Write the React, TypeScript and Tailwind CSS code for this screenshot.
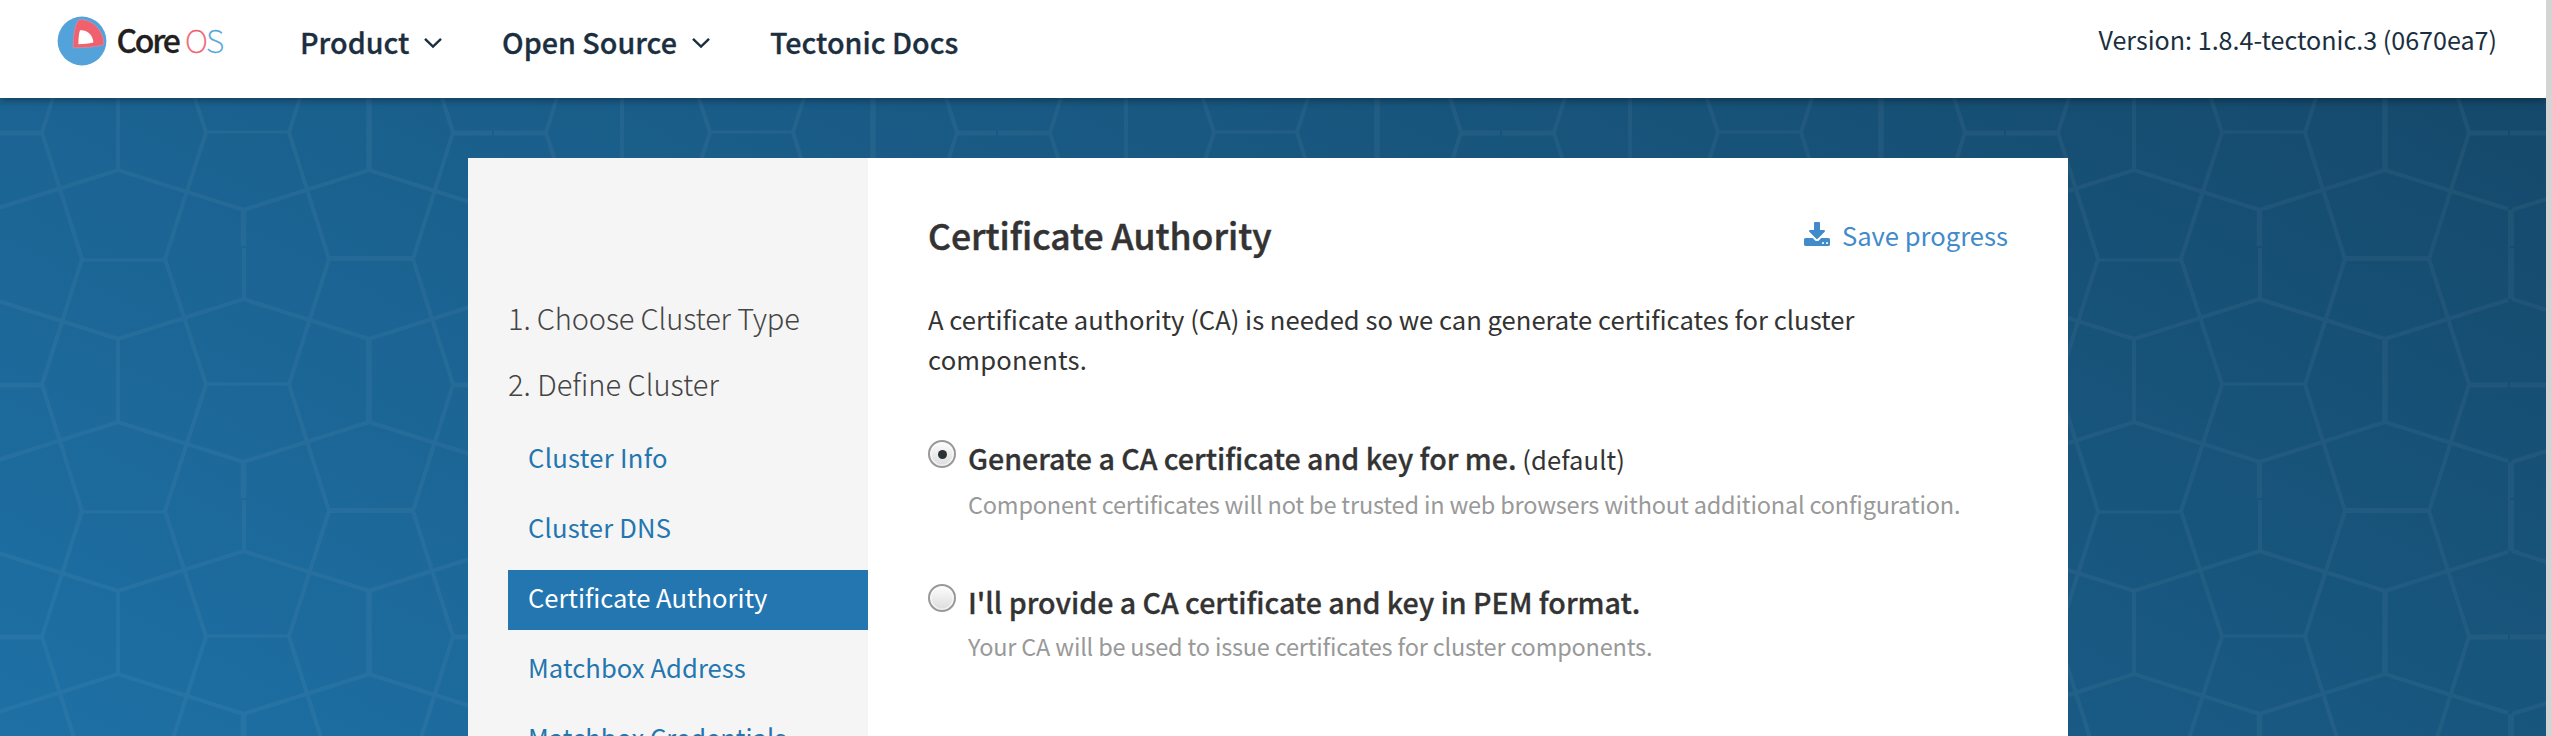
import React from "react";

const nav = [
  { label: "Product", itemClass: "w-[202px]", labelClass: "w-[124px]", menu: true },
  { label: "Open Source", itemClass: "w-[268px]", labelClass: "w-[190px]", menu: true },
  { label: "Tectonic Docs", itemClass: "w-[200px]", labelClass: "w-[200px]", menu: false },
];

const steps = [
  { label: "Cluster Info", tracking: "tracking-[0.3px]", active: false },
  { label: "Cluster DNS", tracking: "tracking-[0.2px]", active: false },
  { label: "Certificate Authority", tracking: "tracking-[-0.03px]", active: true },
  { label: "Matchbox Address", tracking: "tracking-[0.05px]", active: false },
  { label: "Matchbox Credentials", tracking: "tracking-normal", active: false },
];

function Logo() {
  return (
    <div className="flex items-center">
      <svg className="h-[50px] w-[50px]" viewBox="0 0 50 50">
        <circle cx="25" cy="25" r="24.4" fill="#53a3da" />
        <path d="M16.2 31.8C16.2 20 17.3 10 21.5 4C30 1.8 46.5 10 46.8 28.8C38 31.2 28 31.8 16.2 31.8Z" fill="#f1606d" stroke="#c98fae" strokeWidth="0.8" />
        <path d="M21.4 28.2C21.4 22.5 21.8 17.5 23 14.2C30.5 13.4 36.2 19.5 36.4 26.6C31.5 27.9 27 28.2 21.4 28.2Z" fill="#fff" />
      </svg>
      <div className="flex h-[50px] items-start pl-[9.5px] text-[32px] leading-[46px]">
        <span className="w-[68.5px] font-medium tracking-[-2.3px] text-[#231f20] [-webkit-text-stroke:0.3px]">Core</span>
        <span className="font-thin tracking-[-1.8px] text-[#f1606d] [-webkit-text-stroke:0.4px]">O</span>
        <span className="font-thin text-[#53a3da] [-webkit-text-stroke:0.4px]">S</span>
      </div>
    </div>
  );
}

function Chevron() {
  return (
    <svg className="mt-[1px] h-[12px] w-[18px]" viewBox="0 0 18 12" fill="none" stroke="#1b2f40" strokeWidth="2.4">
      <path d="M1 1.8L9 9.6L17 1.8" />
    </svg>
  );
}

function DownloadIcon() {
  return (
    <svg className="-mt-[2px] h-[24px] w-[26px]" viewBox="0 0 1664 1536" fill="currentColor">
      <path d="M1280 1344q0-26-19-45t-45-19-45 19-19 45 19 45 45 19 45-19 19-45zm256 0q0-26-19-45t-45-19-45 19-19 45 19 45 45 19 45-19 19-45zm128-224v320q0 40-28 68t-68 28h-1472q-40 0-68-28t-28-68v-320q0-40 28-68t68-28h465l135 136q58 56 136 56t136-56l136-136h464q40 0 68 28t28 68zm-325-569q17 41-14 70l-448 448q-18 19-45 19t-45-19l-448-448q-31-29-14-70 17-39 59-39h256v-448q0-26 19-45t45-19h256q26 0 45 19t19 45v448h256q42 0 59 39z" />
    </svg>
  );
}

function Mesh() {
  return (
    <svg className="absolute inset-0 h-full w-full" fill="none">
      <defs>
        <pattern id="mesh" x="-10" y="-102" width="504" height="252" patternUnits="userSpaceOnUse">
          <g stroke="#fff" strokeWidth="4">
            <path d="M52 -115.5L92 11L52 136.5L92 263M216 -115.5L175 11L216 136.5L175 263M299 -115.5L339 11L299 136.5L339 263M463 -115.5L423 11L463 136.5L423 263" />
            <path d="M2 214L128 174L253.5 214L379 174L502 213M2 51L128 91L253.5 51L379 91L502 52" />
            <path d="M128 91V174M254 0V51M504 214V252M504 0V51M2 214V250M2 0V51" />
            <path d="M92 12H175M216 136H299" strokeWidth="3" />
            <path d="M339 10.5H423M463 137H502M0 137H52" strokeWidth="5" />
            <path d="M379 91V174M253.5 214V250" strokeWidth="5.5" />
          </g>
        </pattern>
      </defs>
      <rect width="100%" height="100%" fill="url(#mesh)" opacity="0.042" />
    </svg>
  );
}

function Radio({ checked }: { checked: boolean }) {
  return (
    <span className="mt-[2px] flex h-[28px] w-[28px] items-center justify-center rounded-full border-2 border-[#999] bg-linear-to-b from-[#fdfdfd] to-[#dcdcdc] shadow-[inset_0_0_0_1.5px_rgba(255,255,255,0.6)]">
      {checked && <span className="h-[9px] w-[9px] rounded-full bg-[#2b3336]" />}
    </span>
  );
}

export default function App() {
  return (
    <div className="flex h-[736px] w-full overflow-hidden font-['Noto_Sans_CJK_SC',sans-serif] text-[25.6px]">
      <div className="flex min-w-0 flex-1 flex-col">
        <header className="relative z-10 flex h-[98px] items-start bg-white pl-[57px] text-[#1b2f40] shadow-[0_2px_8px_rgba(0,0,0,0.4)]">
          <div className="w-[243px] pt-[16px]">
            <Logo />
          </div>
          <nav className="flex pt-[22px]">
            {nav.map((n) => (
              <a key={n.label} className={`flex h-[40px] items-center text-[28.7px] leading-[40px] font-medium [-webkit-text-stroke:0.3px] ${n.itemClass}`}>
                <span className={`shrink-0 whitespace-nowrap ${n.labelClass}`}>{n.label}</span>
                {n.menu && <Chevron />}
              </a>
            ))}
          </nav>
          <div className="ml-auto pt-[19px] pr-[49px] text-[25.1px] leading-[40px]">Version: 1.8.4-tectonic.3 (0670ea7)</div>
        </header>

        <div className="relative flex flex-1 bg-[linear-gradient(28deg,#1e70a5,#15496b)] pt-[60px] pl-[468px]">
          <Mesh />
          <div className="relative flex h-[578px] w-[1600px] overflow-hidden bg-white text-[#333]">
            <aside className="w-[400px] bg-[#f5f5f5] pt-[126px] pl-[40px]">
              <div className="h-[66px] text-[29px] leading-[66px] font-light tracking-[-0.14px] text-[#444]">1. Choose Cluster Type</div>
              <div className="h-[66px] text-[29px] leading-[66px] font-light text-[#444]">2. Define Cluster</div>
              <ul className="mt-[14px] flex flex-col gap-[10px]">
                {steps.map((s) => (
                  <li
                    key={s.label}
                    className={`h-[60px] pl-[20px] leading-[54px] ${s.tracking} ${s.active ? "bg-[#2376b0] text-white" : "text-[#2376b0]"}`}
                  >
                    {s.label}
                  </li>
                ))}
              </ul>
            </aside>

            <main className="flex-1 px-[60px] pt-[46px]">
              <div className="flex h-[62px] items-center justify-between">
                <h1 className="text-[35.5px] leading-[60px] font-medium [-webkit-text-stroke:0.5px]">Certificate Authority</h1>
                <a className="flex items-center gap-[12px] text-[#428bca]">
                  <DownloadIcon />
                  <span className="leading-[60px]">Save progress</span>
                </a>
              </div>
              <p className="mt-[33px] leading-[40px]">
                A certificate authority (CA) is needed so we can generate certificates for cluster
                <br />
                <span className="tracking-[0.2px]">components.</span>
              </p>

              <div className="mt-[59px] flex">
                <Radio checked />
                <div className="pl-[12px]">
                  <div className="h-[40px] leading-[40px]">
                    <span className="text-[28.6px] font-medium tracking-[-0.02px] [-webkit-text-stroke:0.3px]">Generate a CA certificate and key for me.</span>{" "}
                    <span className="tracking-[0.1px]">(default)</span>
                  </div>
                  <div className="mt-[6px] h-[40px] text-[23.5px] leading-[40px] tracking-[-0.19px] text-[#999]">
                    Component certificates will not be trusted in web browsers without additional configuration.
                  </div>
                </div>
              </div>

              <div className="mt-[58px] flex">
                <Radio checked={false} />
                <div className="pl-[12px]">
                  <div className="h-[40px] text-[28.6px] leading-[40px] font-medium tracking-[-0.03px] [-webkit-text-stroke:0.3px]">I'll provide a CA certificate and key in PEM format.</div>
                  <div className="mt-[4px] h-[40px] text-[23.5px] leading-[40px] tracking-[-0.2px] text-[#999]">
                    Your CA will be used to issue certificates for cluster components.
                  </div>
                </div>
              </div>
            </main>
          </div>
        </div>
      </div>
      <div className="relative z-20 w-[6px] bg-[#d4d4d4]" />
    </div>
  );
}
